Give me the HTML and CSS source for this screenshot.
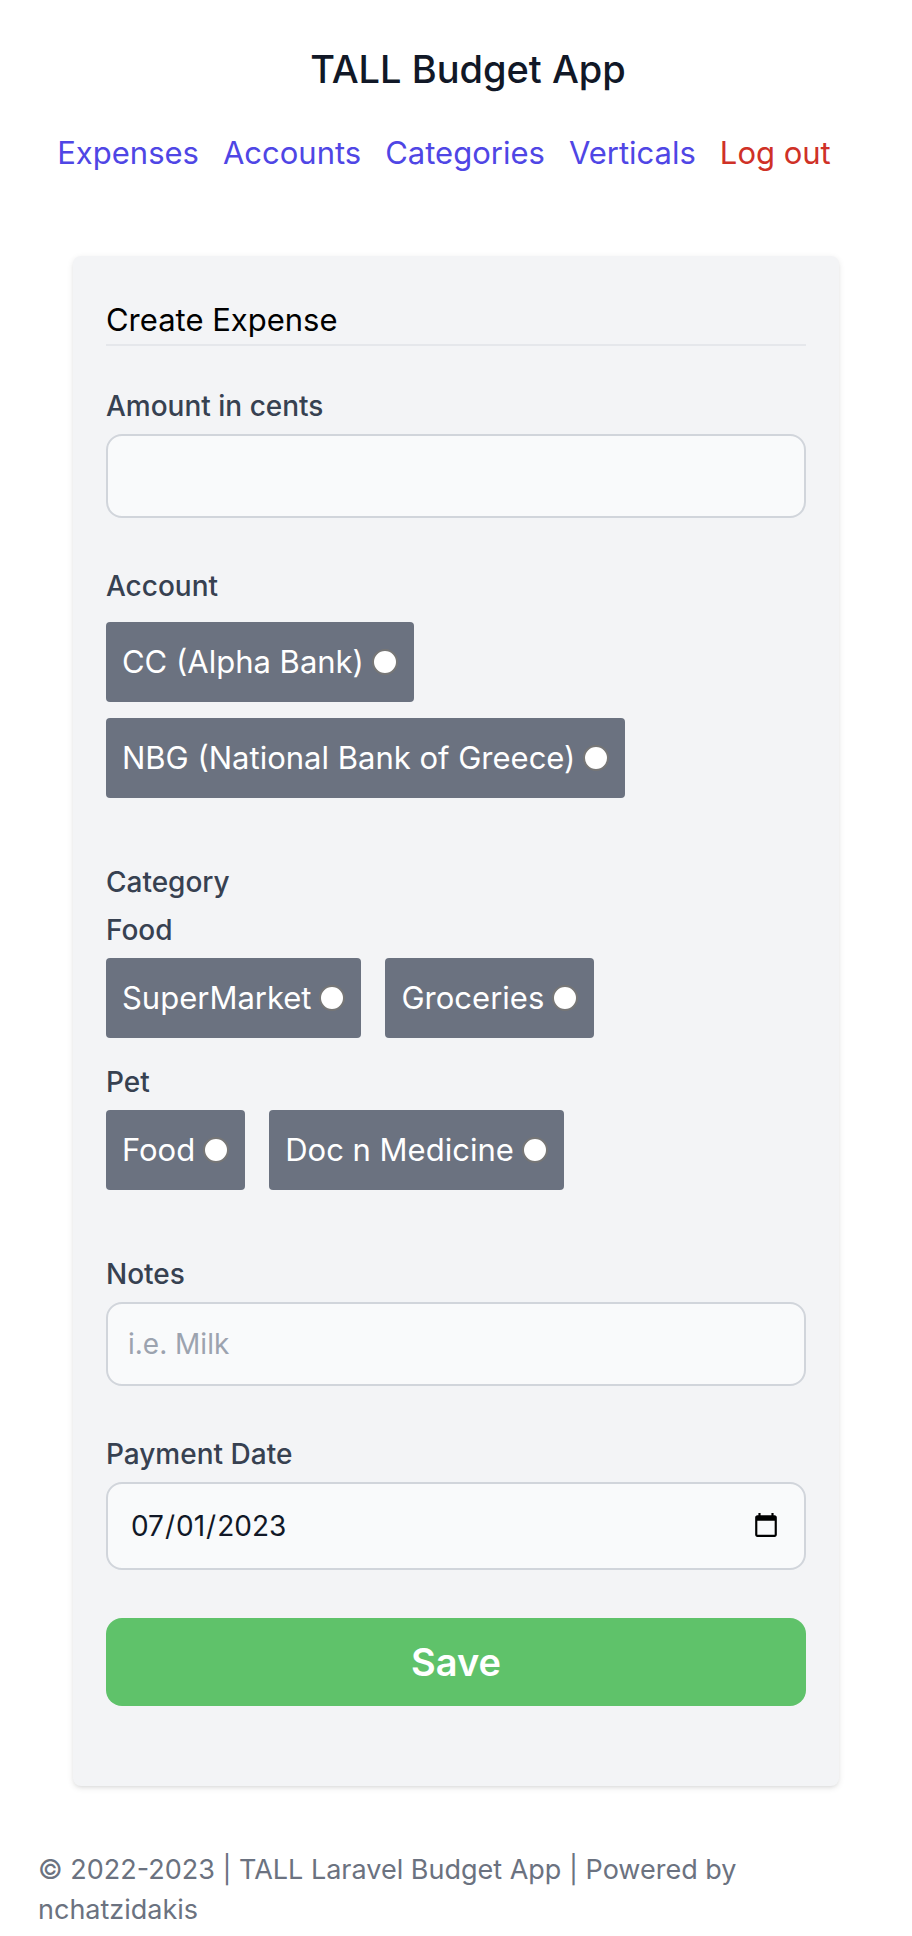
FILE: index.html
```html
<!DOCTYPE html>
<html lang="en">
<head>
<meta charset="utf-8">
<meta name="viewport" content="width=device-width, initial-scale=1">
<title>TALL Budget App</title>
<link rel="stylesheet" href="styles.css">
</head>
<body>
<header class="header">
  <h1 class="title">TALL Budget App</h1>
  <nav class="nav">
    <a class="nav-link" href="#">Expenses</a>
    <a class="nav-link" href="#">Accounts</a>
    <a class="nav-link" href="#">Categories</a>
    <a class="nav-link" href="#">Verticals</a>
    <a class="nav-link nav-logout" href="#">Log out</a>
  </nav>
</header>
<main class="card">
  <h2 class="card-title">Create Expense</h2>
  <form class="form">
    <div class="field">
      <label class="label" for="amount">Amount in cents</label>
      <input class="input" id="amount" type="text" inputmode="numeric">
    </div>
    <fieldset class="group group-account">
      <legend class="label">Account</legend>
      <div class="chips chips-account">
        <label class="chip">CC (Alpha Bank)<input class="radio" type="radio" name="account"></label>
        <label class="chip">NBG (National Bank of Greece)<input class="radio" type="radio" name="account"></label>
      </div>
    </fieldset>
    <fieldset class="group">
      <legend class="label">Category</legend>
      <div class="vertical">
        <h3 class="label">Food</h3>
        <div class="chips">
          <label class="chip">SuperMarket<input class="radio" type="radio" name="category"></label>
          <label class="chip">Groceries<input class="radio" type="radio" name="category"></label>
        </div>
      </div>
      <div class="vertical">
        <h3 class="label">Pet</h3>
        <div class="chips">
          <label class="chip">Food<input class="radio" type="radio" name="category"></label>
          <label class="chip">Doc n Medicine<input class="radio" type="radio" name="category"></label>
        </div>
      </div>
    </fieldset>
    <div class="field">
      <label class="label" for="notes">Notes</label>
      <input class="input" id="notes" type="text" placeholder="i.e. Milk">
    </div>
    <div class="field">
      <label class="label" for="date">Payment Date</label>
      <input class="input input-date" id="date" type="date" value="2023-07-01">
    </div>
    <button class="save" type="submit">Save</button>
  </form>
</main>
<footer class="footer">© 2022-2023 | TALL Laravel Budget App | Powered by nchatzidakis</footer>
</body>
</html>
```
FILE: styles.css
```css
* {
  box-sizing: border-box;
  margin: 0;
  padding: 0;
}

body {
  background: #fff;
  color: #000;
  font-family: Inter, "Liberation Sans", sans-serif;
  font-size: 31px;
  line-height: 48px;
}

.header {
  padding-top: 41px;
}

.title {
  padding-left: 24px;
  color: #111827;
  font-size: 38px;
  font-weight: 500;
  line-height: 56px;
  text-align: center;
}

.nav {
  display: flex;
  justify-content: center;
  gap: 24px;
  margin-top: 32px;
  padding-right: 24px;
}

.nav-link {
  color: #4f46e5;
  text-decoration: none;
  white-space: nowrap;
}

.nav-logout {
  color: #cf3127;
}

.card {
  margin: 79px 8% 0;
  padding: 40px 33px 80px;
  border-radius: 8px;
  background: #f3f4f6;
  box-shadow: 0 2px 6px rgba(0, 0, 0, 0.1), 0 2px 4px -2px rgba(0, 0, 0, 0.1);
}

.card-title {
  border-bottom: 2px solid #e5e7eb;
  font-size: 31px;
  font-weight: 400;
}

.form {
  display: flex;
  flex-direction: column;
  gap: 48px;
  padding-top: 40px;
}

.field {
  display: flex;
  flex-direction: column;
  gap: 8px;
}

.label {
  display: block;
  color: #374151;
  font-size: 28px;
  font-weight: 500;
  line-height: 40px;
}

.input {
  width: 100%;
  height: 84px;
  padding: 20px;
  border: 2px solid #d1d5db;
  border-radius: 16px;
  background: #f9fafb;
  color: #111827;
  font: inherit;
  font-size: 28px;
  line-height: 40px;
}

.input::placeholder {
  color: #9ca3af;
}

.input-date {
  height: 88px;
  padding: 20px 22px;
}

.group {
  border: 0;
  padding-bottom: 16px;
}

.chips {
  display: flex;
  flex-wrap: wrap;
  gap: 16px 24px;
  padding-top: 8px;
}

.chips-account {
  padding-top: 16px;
}

.vertical {
  padding-top: 8px;
}

.vertical + .vertical {
  padding-top: 24px;
}

.chip {
  display: flex;
  align-items: center;
  gap: 8px;
  padding: 16px;
  border-radius: 4px;
  background: #6b7280;
  color: #fff;
}

.radio {
  appearance: none;
  width: 26px;
  height: 26px;
  border: 2px solid #767676;
  border-radius: 50%;
  background: #fff;
}

.radio:checked {
  border: 7px solid #2563eb;
}

.save {
  height: 88px;
  border: 0;
  border-radius: 16px;
  background: #5fc26a;
  color: #fff;
  font: inherit;
  font-size: 38px;
  font-weight: 600;
}

.footer {
  padding: 64px 38px 6px;
  color: #6b7280;
  font-size: 27px;
  line-height: 40px;
}
```
